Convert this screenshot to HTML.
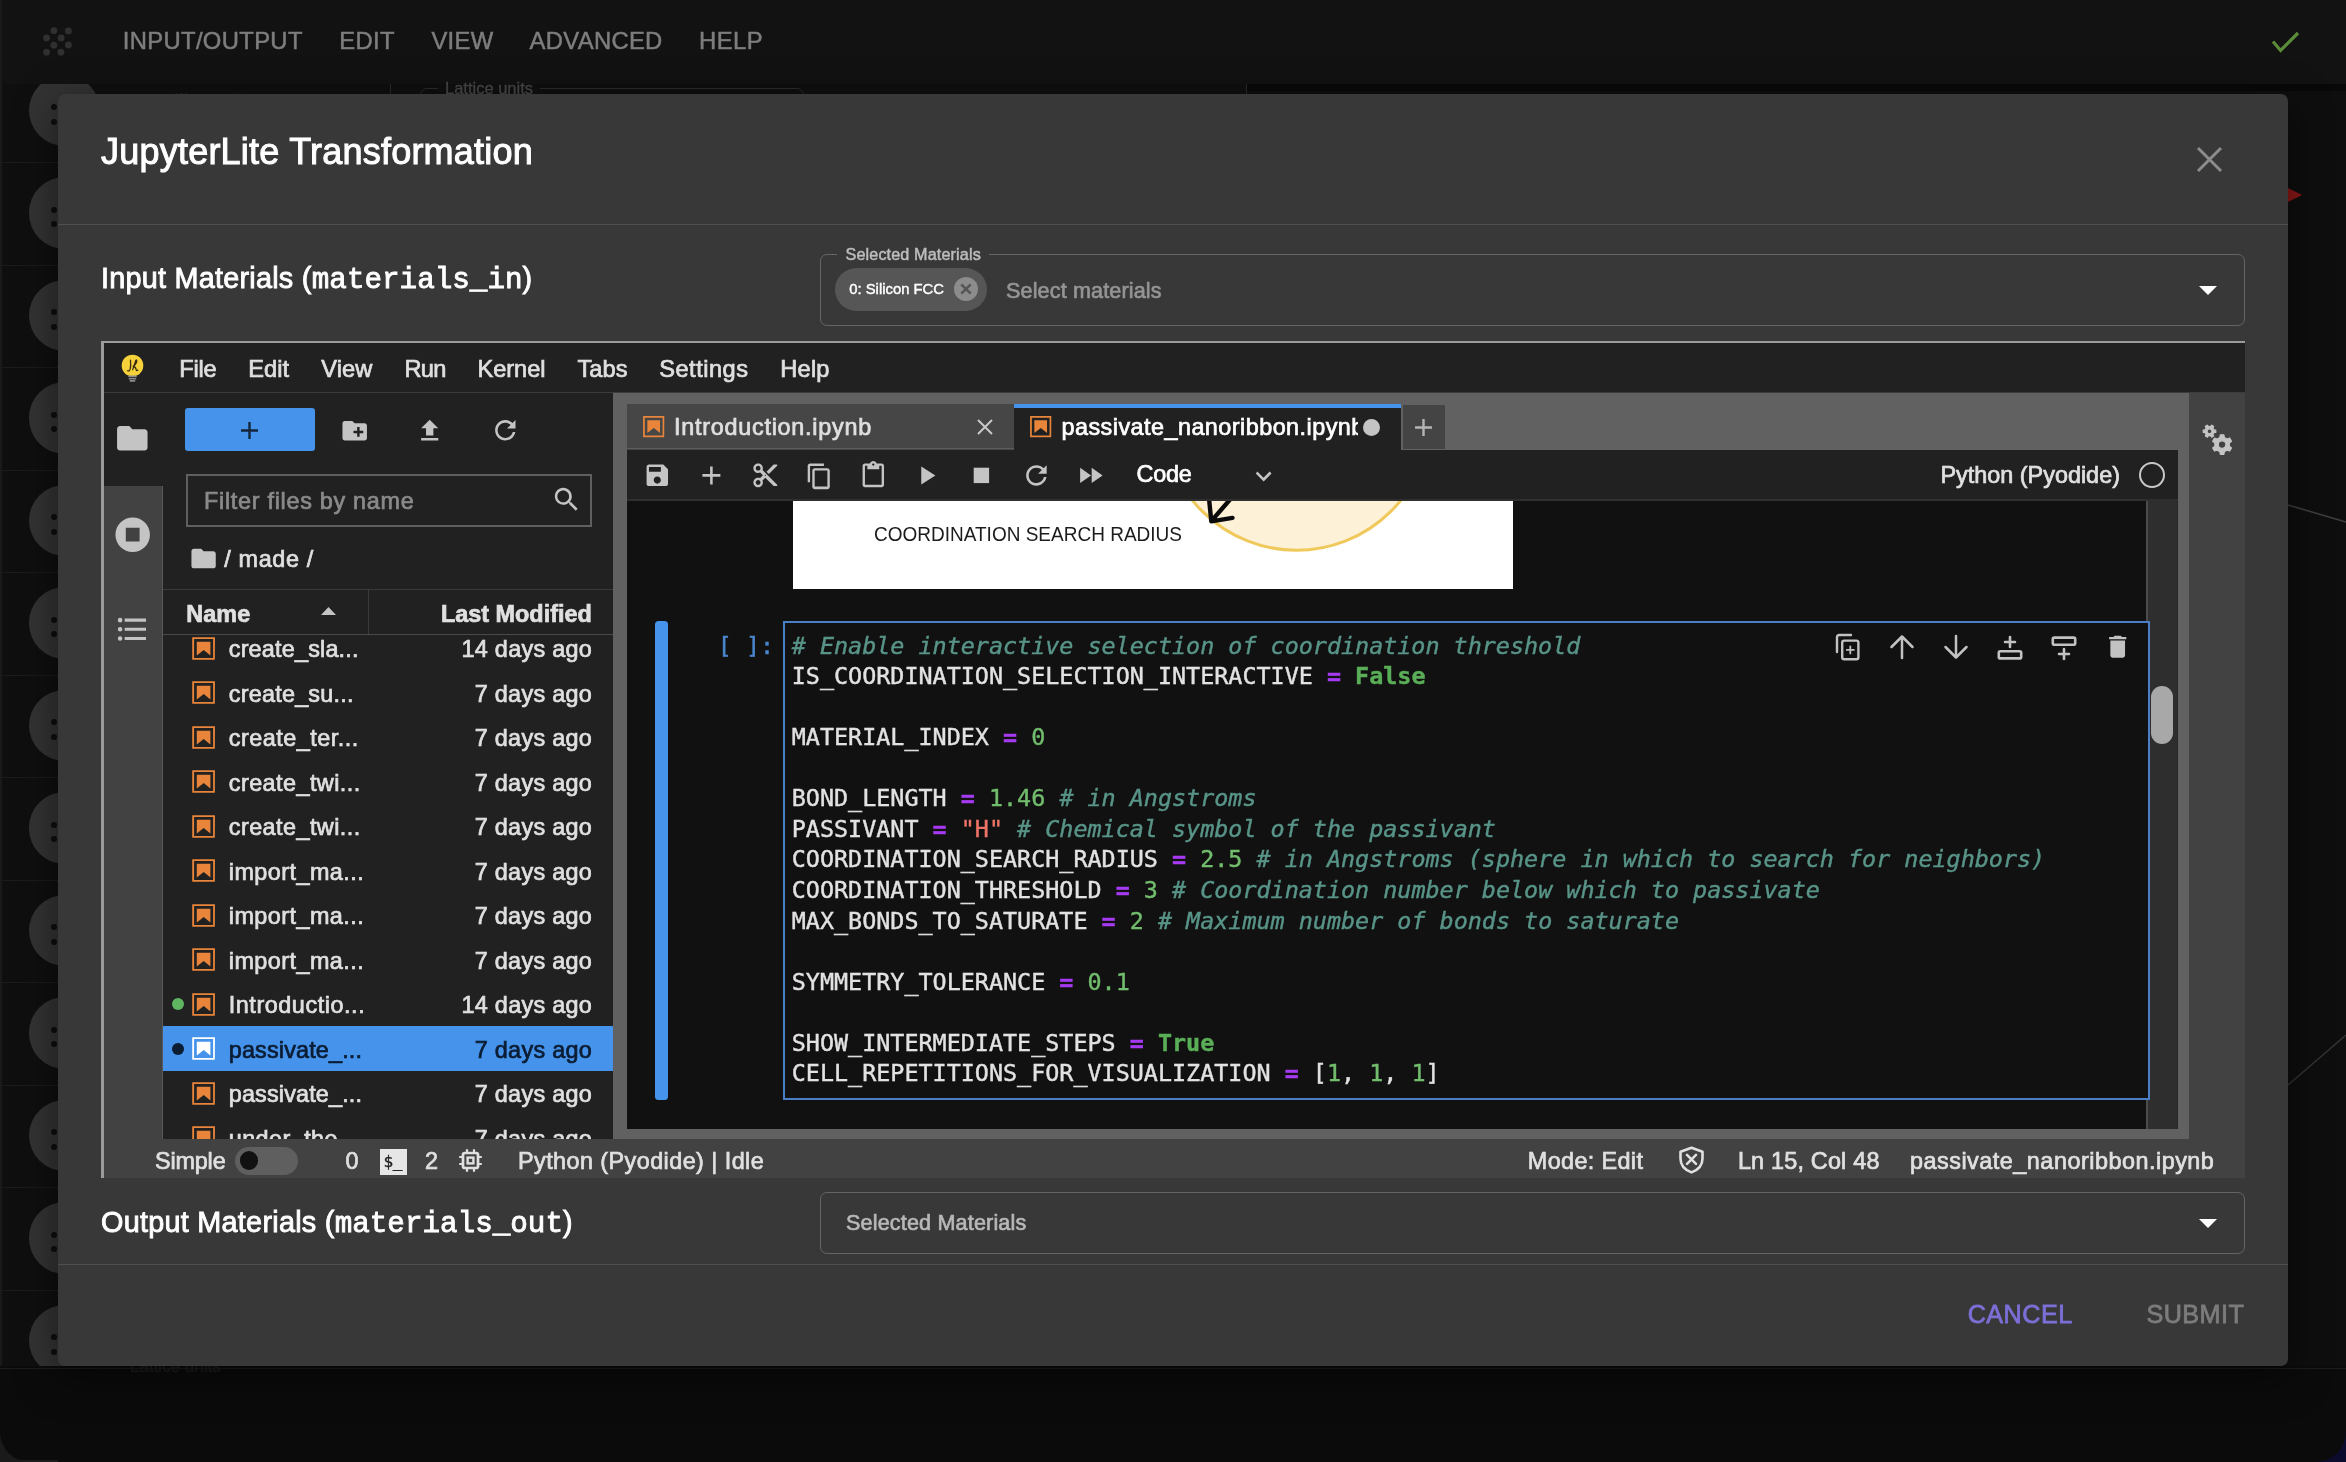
<!DOCTYPE html>
<html lang="en"><head><meta charset="utf-8"><title>JupyterLite Transformation</title>
<style>
html,body{margin:0;padding:0;}
body{width:2346px;height:1462px;overflow:hidden;background:#0c0c0c;position:relative;font-family:"Liberation Sans",Arial,sans-serif;}
#root{position:absolute;left:0;top:0;width:2346px;height:1462px;overflow:hidden;will-change:transform;}
.a{position:absolute;box-sizing:border-box;}
.t{position:absolute;white-space:pre;display:block;-webkit-text-stroke:0.7px;}
.m{-webkit-text-stroke:0.4px;}
svg{display:block;overflow:visible;}
</style></head><body><div id="root">
<div class="a" style="left:0.00px;top:83.00px;width:1245.00px;height:1285.00px;background:#0f0f0f;"></div>
<div class="a" style="left:1245.00px;top:83.00px;width:1101.00px;height:1285.00px;background:#0e0e0e;"></div>
<div class="a" style="left:1246.00px;top:83.50px;width:1100.00px;height:7.00px;background:#080808;"></div>
<div class="a" style="left:1245.50px;top:84.00px;width:1.20px;height:11.00px;background:#2a2a2a;"></div>
<div class="a" style="left:0.00px;top:0.00px;width:2346.00px;height:83.50px;background:#121212;"></div>
<div class="a" style="left:0.00px;top:0.00px;width:2.00px;height:1462.00px;background:#1a1a1a;"></div>
<svg class="a" style="left:0px;top:0px" width="100" height="80" viewBox="0 0 100 80" fill="#303030"><circle cx="53.9" cy="30.7" r="3.4"/><circle cx="68.4" cy="30.9" r="3.4"/><circle cx="46.6" cy="37.9" r="3.4"/><circle cx="61.1" cy="37.9" r="3.4"/><circle cx="53.9" cy="45.2" r="3.4"/><circle cx="68.4" cy="45" r="3.4"/><circle cx="46.6" cy="52.2" r="3.4"/><circle cx="60.9" cy="52.2" r="3.4"/></svg>
<span class="t" style="left:122.80px;top:29.49px;font-size:23.8px;line-height:23.8px;color:#7e7e7e;letter-spacing:0.345px;-webkit-text-stroke:0.5px;">INPUT/OUTPUT</span>
<span class="t" style="left:339.30px;top:29.49px;font-size:23.8px;line-height:23.8px;color:#7e7e7e;letter-spacing:0.322px;-webkit-text-stroke:0.5px;">EDIT</span>
<span class="t" style="left:431.40px;top:29.49px;font-size:23.8px;line-height:23.8px;color:#7e7e7e;letter-spacing:0.294px;-webkit-text-stroke:0.5px;">VIEW</span>
<span class="t" style="left:529.60px;top:29.49px;font-size:23.8px;line-height:23.8px;color:#7e7e7e;letter-spacing:0.314px;-webkit-text-stroke:0.5px;">ADVANCED</span>
<span class="t" style="left:699.00px;top:29.49px;font-size:23.8px;line-height:23.8px;color:#7e7e7e;letter-spacing:0.456px;-webkit-text-stroke:0.5px;">HELP</span>
<svg class="a" style="left:2268px;top:28px" width="36" height="28" viewBox="0 0 36 28" fill="none" stroke="#5b8c3a" stroke-width="3.2"><path d="M5 13.5 L12.6 22.5 L30 5"/></svg>
<div class="a" style="left:0.00px;top:162.00px;width:400.00px;height:1.00px;background:#1b1b1b;"></div>
<div class="a" style="left:0.00px;top:264.50px;width:400.00px;height:1.00px;background:#1b1b1b;"></div>
<div class="a" style="left:0.00px;top:367.00px;width:400.00px;height:1.00px;background:#1b1b1b;"></div>
<div class="a" style="left:0.00px;top:469.50px;width:400.00px;height:1.00px;background:#1b1b1b;"></div>
<div class="a" style="left:0.00px;top:572.00px;width:400.00px;height:1.00px;background:#1b1b1b;"></div>
<div class="a" style="left:0.00px;top:674.50px;width:400.00px;height:1.00px;background:#1b1b1b;"></div>
<div class="a" style="left:0.00px;top:777.00px;width:400.00px;height:1.00px;background:#1b1b1b;"></div>
<div class="a" style="left:0.00px;top:879.50px;width:400.00px;height:1.00px;background:#1b1b1b;"></div>
<div class="a" style="left:0.00px;top:982.00px;width:400.00px;height:1.00px;background:#1b1b1b;"></div>
<div class="a" style="left:0.00px;top:1084.50px;width:400.00px;height:1.00px;background:#1b1b1b;"></div>
<div class="a" style="left:0.00px;top:1187.00px;width:400.00px;height:1.00px;background:#1b1b1b;"></div>
<div class="a" style="left:0.00px;top:1289.50px;width:400.00px;height:1.00px;background:#1b1b1b;"></div>
<div class="a" style="left:0.00px;top:1392.00px;width:400.00px;height:1.00px;background:#1b1b1b;"></div>
<div class="a" style="left:0;top:84.2px;width:200px;height:1378px;overflow:hidden;">
<div class="a" style="left:28.9px;top:-9.60px;width:71.6px;height:71.6px;border-radius:50%;background:#333333;"></div>
<div class="a" style="left:50.6px;top:20.00px;width:6.2px;height:6.2px;border-radius:50%;background:#0e0e0e;"></div>
<div class="a" style="left:50.6px;top:34.40px;width:6.2px;height:6.2px;border-radius:50%;background:#0e0e0e;"></div>
<div class="a" style="left:28.9px;top:92.90px;width:71.6px;height:71.6px;border-radius:50%;background:#333333;"></div>
<div class="a" style="left:50.6px;top:122.50px;width:6.2px;height:6.2px;border-radius:50%;background:#0e0e0e;"></div>
<div class="a" style="left:50.6px;top:136.90px;width:6.2px;height:6.2px;border-radius:50%;background:#0e0e0e;"></div>
<div class="a" style="left:28.9px;top:195.40px;width:71.6px;height:71.6px;border-radius:50%;background:#333333;"></div>
<div class="a" style="left:50.6px;top:225.00px;width:6.2px;height:6.2px;border-radius:50%;background:#0e0e0e;"></div>
<div class="a" style="left:50.6px;top:239.40px;width:6.2px;height:6.2px;border-radius:50%;background:#0e0e0e;"></div>
<div class="a" style="left:28.9px;top:297.90px;width:71.6px;height:71.6px;border-radius:50%;background:#333333;"></div>
<div class="a" style="left:50.6px;top:327.50px;width:6.2px;height:6.2px;border-radius:50%;background:#0e0e0e;"></div>
<div class="a" style="left:50.6px;top:341.90px;width:6.2px;height:6.2px;border-radius:50%;background:#0e0e0e;"></div>
<div class="a" style="left:28.9px;top:400.40px;width:71.6px;height:71.6px;border-radius:50%;background:#333333;"></div>
<div class="a" style="left:50.6px;top:430.00px;width:6.2px;height:6.2px;border-radius:50%;background:#0e0e0e;"></div>
<div class="a" style="left:50.6px;top:444.40px;width:6.2px;height:6.2px;border-radius:50%;background:#0e0e0e;"></div>
<div class="a" style="left:28.9px;top:502.90px;width:71.6px;height:71.6px;border-radius:50%;background:#333333;"></div>
<div class="a" style="left:50.6px;top:532.50px;width:6.2px;height:6.2px;border-radius:50%;background:#0e0e0e;"></div>
<div class="a" style="left:50.6px;top:546.90px;width:6.2px;height:6.2px;border-radius:50%;background:#0e0e0e;"></div>
<div class="a" style="left:28.9px;top:605.40px;width:71.6px;height:71.6px;border-radius:50%;background:#333333;"></div>
<div class="a" style="left:50.6px;top:635.00px;width:6.2px;height:6.2px;border-radius:50%;background:#0e0e0e;"></div>
<div class="a" style="left:50.6px;top:649.40px;width:6.2px;height:6.2px;border-radius:50%;background:#0e0e0e;"></div>
<div class="a" style="left:28.9px;top:707.90px;width:71.6px;height:71.6px;border-radius:50%;background:#333333;"></div>
<div class="a" style="left:50.6px;top:737.50px;width:6.2px;height:6.2px;border-radius:50%;background:#0e0e0e;"></div>
<div class="a" style="left:50.6px;top:751.90px;width:6.2px;height:6.2px;border-radius:50%;background:#0e0e0e;"></div>
<div class="a" style="left:28.9px;top:810.40px;width:71.6px;height:71.6px;border-radius:50%;background:#333333;"></div>
<div class="a" style="left:50.6px;top:840.00px;width:6.2px;height:6.2px;border-radius:50%;background:#0e0e0e;"></div>
<div class="a" style="left:50.6px;top:854.40px;width:6.2px;height:6.2px;border-radius:50%;background:#0e0e0e;"></div>
<div class="a" style="left:28.9px;top:912.90px;width:71.6px;height:71.6px;border-radius:50%;background:#333333;"></div>
<div class="a" style="left:50.6px;top:942.50px;width:6.2px;height:6.2px;border-radius:50%;background:#0e0e0e;"></div>
<div class="a" style="left:50.6px;top:956.90px;width:6.2px;height:6.2px;border-radius:50%;background:#0e0e0e;"></div>
<div class="a" style="left:28.9px;top:1015.40px;width:71.6px;height:71.6px;border-radius:50%;background:#333333;"></div>
<div class="a" style="left:50.6px;top:1045.00px;width:6.2px;height:6.2px;border-radius:50%;background:#0e0e0e;"></div>
<div class="a" style="left:50.6px;top:1059.40px;width:6.2px;height:6.2px;border-radius:50%;background:#0e0e0e;"></div>
<div class="a" style="left:28.9px;top:1117.90px;width:71.6px;height:71.6px;border-radius:50%;background:#333333;"></div>
<div class="a" style="left:50.6px;top:1147.50px;width:6.2px;height:6.2px;border-radius:50%;background:#0e0e0e;"></div>
<div class="a" style="left:50.6px;top:1161.90px;width:6.2px;height:6.2px;border-radius:50%;background:#0e0e0e;"></div>
<div class="a" style="left:28.9px;top:1220.40px;width:71.6px;height:71.6px;border-radius:50%;background:#333333;"></div>
<div class="a" style="left:50.6px;top:1250.00px;width:6.2px;height:6.2px;border-radius:50%;background:#0e0e0e;"></div>
<div class="a" style="left:50.6px;top:1264.40px;width:6.2px;height:6.2px;border-radius:50%;background:#0e0e0e;"></div>
</div>
<div class="a" style="left:390.00px;top:84.00px;width:1.00px;height:12.00px;background:#2a2a2a;"></div>
<div class="a" style="left:420px;top:88px;width:384px;height:30px;border:1px solid #2c2c2c;border-radius:7px;"></div>
<div class="a" style="left:438.00px;top:86.00px;width:102.00px;height:6.00px;background:#101010;"></div>
<span class="t" style="left:445.00px;top:80.57px;font-size:16.6px;line-height:16.6px;color:#484848;letter-spacing:-0.045px;-webkit-text-stroke:0.3px;">Lattice units</span>
<span class="t" style="left:135.00px;top:90.91px;font-size:22px;line-height:22px;color:#1f1f1f;-webkit-text-stroke:0.66px;">0: Silicon FCC</span>
<svg class="a" style="left:2280px;top:180px" width="66" height="1000" viewBox="0 0 66 1000" fill="none"><path d="M8 8 L22 15 L8 22 Z" fill="#8b1717"/><path d="M8 325 L66 342" stroke="#3f3f3f" stroke-width="1.6"/><path d="M8 905 L66 855" stroke="#333" stroke-width="1.6"/></svg>
<div class="a" style="left:0.00px;top:1366.00px;width:2346.00px;height:96.00px;background:#0b0b0b;"></div>
<div class="a" style="left:0.00px;top:1368.00px;width:2346.00px;height:1.20px;background:#1d1d1d;"></div>
<span class="t" style="left:130.00px;top:1357.63px;font-size:17px;line-height:17px;color:#1e1e1e;-webkit-text-stroke:0.51px;">Lattice units</span>
<div class="a" style="left:-2px;top:1402px;width:60px;height:60px;border:2px solid #1c1c1c;border-radius:0 0 0 24px;border-top:none;border-right:none;"></div>
<svg class="a" style="left:2316px;top:1432px" width="30" height="30" viewBox="0 0 30 30"><path d="M30 0 V30 H0 A30 30 0 0 0 30 0 Z" fill="#0b0b2e"/></svg>
<svg class="a" style="left:0px;top:1432px" width="30" height="30" viewBox="0 0 30 30"><path d="M0 0 V30 H30 A30 30 0 0 1 0 0 Z" fill="#1a1a1a"/></svg>
<div class="a" style="left:58.00px;top:94.00px;width:2230.00px;height:1272.00px;background:#383838;border-radius:7px;box-shadow:0 10px 40px rgba(0,0,0,.5);"></div>
<span class="t" style="left:101.00px;top:133.98px;font-size:36px;line-height:36px;color:#ffffff;letter-spacing:0.223px;-webkit-text-stroke:1.0px;">JupyterLite Transformation</span>
<svg class="a" style="left:2197px;top:146.5px" width="25" height="25" viewBox="0 0 25 25" stroke="#8c8c8c" stroke-width="3" fill="none"><path d="M1 1 L24 24 M24 1 L1 24"/></svg>
<div class="a" style="left:58.00px;top:223.70px;width:2230.00px;height:1.20px;background:#4f4f4f;"></div>
<span class="t" style="left:101.00px;top:264.01px;font-size:28.8px;line-height:28.8px;color:#ffffff;letter-spacing:0.236px;-webkit-text-stroke:0.86px;">Input Materials (</span>
<span class="t" style="left:311.80px;top:265.91px;font-size:29.27px;line-height:29.27px;color:#ffffff;font-family:'Liberation Mono', monospace;-webkit-text-stroke:0.88px;">materials_in</span>
<span class="t" style="left:522.60px;top:264.01px;font-size:28.8px;line-height:28.8px;color:#ffffff;-webkit-text-stroke:0.86px;">)</span>
<div class="a" style="left:819.7px;top:254px;width:1425.8px;height:71.7px;border:1.3px solid #656565;border-radius:7px;"></div>
<div class="a" style="left:837.00px;top:252.00px;width:152.00px;height:5.00px;background:#383838;"></div>
<span class="t" style="left:845.50px;top:245.81px;font-size:16.2px;line-height:16.2px;color:#bdbdbd;letter-spacing:0.124px;-webkit-text-stroke:0.49px;">Selected Materials</span>
<div class="a" style="left:835.00px;top:268.00px;width:152.25px;height:43.00px;background:#565656;border-radius:22px;"></div>
<span class="t" style="left:849.25px;top:281.79px;font-size:14.8px;line-height:14.8px;color:#ffffff;letter-spacing:0.012px;-webkit-text-stroke:0.44px;">0: Silicon FCC</span>
<svg class="a" style="left:954px;top:277.25px" width="24" height="24" viewBox="0 0 24 24"><circle cx="12" cy="12" r="12" fill="#8c8c8c"/><path d="M7.3 7.3 L16.7 16.7 M16.7 7.3 L7.3 16.7" stroke="#565656" stroke-width="2.6" fill="none"/></svg>
<span class="t" style="left:1006.00px;top:279.55px;font-size:21.6px;line-height:21.6px;color:#959595;letter-spacing:0.130px;-webkit-text-stroke:0.65px;">Select materials</span>
<svg class="a" style="left:2198.5px;top:285.5px" width="18" height="9" viewBox="0 0 18 9" fill="#ffffff"><path d="M0 0 L18 0 L9 9 Z"/></svg>
<span class="t" style="left:101.00px;top:1208.16px;font-size:28.8px;line-height:28.8px;color:#ffffff;letter-spacing:0.267px;-webkit-text-stroke:0.86px;">Output Materials (</span>
<span class="t" style="left:334.69px;top:1210.06px;font-size:29.27px;line-height:29.27px;color:#ffffff;font-family:'Liberation Mono', monospace;-webkit-text-stroke:0.88px;">materials_out</span>
<span class="t" style="left:563.03px;top:1208.16px;font-size:28.8px;line-height:28.8px;color:#ffffff;-webkit-text-stroke:0.86px;">)</span>
<div class="a" style="left:819.7px;top:1192px;width:1425.8px;height:62px;border:1.3px solid #656565;border-radius:7px;"></div>
<span class="t" style="left:846.00px;top:1212.25px;font-size:21.6px;line-height:21.6px;color:#b8b8b8;letter-spacing:0.156px;-webkit-text-stroke:0.65px;">Selected Materials</span>
<svg class="a" style="left:2198.5px;top:1218.5px" width="18" height="9" viewBox="0 0 18 9" fill="#ffffff"><path d="M0 0 L18 0 L9 9 Z"/></svg>
<div class="a" style="left:58.00px;top:1263.60px;width:2230.00px;height:1.20px;background:#4f4f4f;"></div>
<span class="t" style="left:1967.70px;top:1301.71px;font-size:25.2px;line-height:25.2px;color:#7b6fd6;letter-spacing:0.461px;-webkit-text-stroke:0.76px;">CANCEL</span>
<span class="t" style="left:2146.40px;top:1301.71px;font-size:25.2px;line-height:25.2px;color:#7c7c7c;letter-spacing:0.466px;-webkit-text-stroke:0.76px;">SUBMIT</span>
<div class="a" style="left:101.00px;top:340.50px;width:2144.20px;height:837.00px;background:#9b9b9b;"></div>
<div class="a" style="left:104.25px;top:343.25px;width:2140.95px;height:834.25px;background:#212121;"></div>
<div class="a" style="left:104.25px;top:343.25px;width:2140.95px;height:48.75px;background:#212121;"></div>
<div class="a" style="left:104.25px;top:391.60px;width:2140.95px;height:1.00px;background:#3c3c3c;"></div>
<svg class="a" style="left:120px;top:354px" width="25" height="30" viewBox="0 0 25 30"><circle cx="12.5" cy="11.5" r="10.8" fill="#f5d13a"/><path d="M8.2 22.3 h8.6 M8.8 24.6 h7.4 M9.8 26.9 h5.4" stroke="#8a8a8a" stroke-width="1.6" fill="none"/><path d="M10.5 6.2 q0.6 6 -0.4 9.2 q-0.8 2.2 -2.4 1.2 M12.7 15.6 q1.8 -5 3 -9 q1.3 -1.6 1 1.3 q-1.2 3.2 -3.8 4.4 q2.6 -0.2 3.4 3.6 q0.5 1.2 1.6 0.2" stroke="#3a2a10" stroke-width="1.3" fill="none" stroke-linecap="round"/></svg>
<span class="t" style="left:179.25px;top:357.56px;font-size:23.6px;line-height:23.6px;color:#e0e0e0;letter-spacing:-0.195px;">File</span>
<span class="t" style="left:248.25px;top:357.56px;font-size:23.6px;line-height:23.6px;color:#e0e0e0;letter-spacing:0.021px;">Edit</span>
<span class="t" style="left:321.25px;top:357.56px;font-size:23.6px;line-height:23.6px;color:#e0e0e0;letter-spacing:0.130px;">View</span>
<span class="t" style="left:404.50px;top:357.56px;font-size:23.6px;line-height:23.6px;color:#e0e0e0;letter-spacing:-0.765px;">Run</span>
<span class="t" style="left:477.50px;top:357.56px;font-size:23.6px;line-height:23.6px;color:#e0e0e0;letter-spacing:-0.037px;">Kernel</span>
<span class="t" style="left:577.50px;top:357.56px;font-size:23.6px;line-height:23.6px;color:#e0e0e0;letter-spacing:0.037px;">Tabs</span>
<span class="t" style="left:659.25px;top:357.56px;font-size:23.6px;line-height:23.6px;color:#e0e0e0;letter-spacing:0.497px;">Settings</span>
<span class="t" style="left:780.25px;top:357.56px;font-size:23.6px;line-height:23.6px;color:#e0e0e0;letter-spacing:0.240px;">Help</span>
<div class="a" style="left:104.25px;top:392.60px;width:58.75px;height:746.65px;background:#424242;"></div>
<div class="a" style="left:104.25px;top:392.60px;width:58.75px;height:93.65px;background:#212121;"></div>
<svg class="a" style="left:114.45px;top:420.20px;" width="36.6" height="36.6" viewBox="0 0 24 24" fill="#c4c4c4"><path d="M10 4H4c-1.1 0-1.99.9-1.99 2L2 18c0 1.1.9 2 2 2h16c1.1 0 2-.9 2-2V8c0-1.1-.9-2-2-2h-8l-2-2z"/></svg>
<svg class="a" style="left:112.05px;top:513.80px;" width="41.4" height="41.4" viewBox="0 0 24 24" fill="#c4c4c4"><path d="M12 2C6.48 2 2 6.48 2 12s4.48 10 10 10 10-4.48 10-10S17.52 2 12 2zm4 14H8V8h8v8z"/></svg>
<svg class="a" style="left:114.20px;top:611.30px;" width="36.6" height="36.6" viewBox="0 0 24 24" fill="#c4c4c4"><path d="M7,5H21V7H7V5M7,13V11H21V13H7M4,4.5A1.5,1.5 0 0,1 5.5,6A1.5,1.5 0 0,1 4,7.5A1.5,1.5 0 0,1 2.5,6A1.5,1.5 0 0,1 4,4.5M4,10.5A1.5,1.5 0 0,1 5.5,12A1.5,1.5 0 0,1 4,13.5A1.5,1.5 0 0,1 2.5,12A1.5,1.5 0 0,1 4,10.5M7,19V17H21V19H7M4,16.5A1.5,1.5 0 0,1 5.5,18A1.5,1.5 0 0,1 4,19.5A1.5,1.5 0 0,1 2.5,18A1.5,1.5 0 0,1 4,16.5Z"/></svg>
<div class="a" style="left:163.00px;top:392.60px;width:450.00px;height:746.65px;background:#212121;"></div>
<div class="a" style="left:162.40px;top:486.25px;width:1.10px;height:653.00px;background:#585858;"></div>
<div class="a" style="left:185.00px;top:408.00px;width:130.25px;height:43.00px;background:#4593ea;border-radius:3px;"></div>
<svg class="a" style="left:235.00px;top:416.25px;" width="29" height="29" viewBox="0 0 24 24" fill="#14263c"><path d="M19 13h-6v6h-2v-6H5v-2h6V5h2v6h6v2z"/></svg>
<svg class="a" style="left:340.30px;top:416.05px;" width="29.4" height="29.4" viewBox="0 0 24 24" fill="#c4c4c4"><path d="M20 6h-8l-2-2H4c-1.11 0-1.99.89-1.99 2L2 18c0 1.11.89 2 2 2h16c1.11 0 2-.89 2-2V8c0-1.11-.89-2-2-2zm-1 8h-3v3h-2v-3h-3v-2h3V9h2v3h3v2z"/></svg>
<svg class="a" style="left:414.80px;top:416.05px;" width="29.4" height="29.4" viewBox="0 0 24 24" fill="#c4c4c4"><path d="M9 16h6v-6h4l-7-7-7 7h4zm-4 2h14v2H5z"/></svg>
<svg class="a" style="left:490.45px;top:415.45px;" width="30.6" height="30.6" viewBox="0 0 18 18" fill="#c4c4c4"><path d="M9 13.5c-2.49 0-4.5-2.01-4.5-4.5S6.51 4.5 9 4.5c1.24 0 2.36.52 3.17 1.33L10 8h5V3l-1.76 1.76C12.15 3.68 10.66 3 9 3 5.69 3 3.01 5.69 3.01 9S5.69 15 9 15c2.97 0 5.43-2.16 5.9-5h-1.52c-.46 2-2.24 3.5-4.38 3.5z"/></svg>
<div class="a" style="left:185.5px;top:474.2px;width:406.75px;height:53.3px;border:2px solid #5f5f5f;background:#212121;"></div>
<span class="t" style="left:204.00px;top:489.93px;font-size:23.4px;line-height:23.4px;color:#8a8a8a;letter-spacing:0.707px;">Filter files by name</span>
<svg class="a" style="left:552.25px;top:485.25px;" width="28.5" height="28.5" viewBox="0 0 18 18" fill="#c4c4c4"><path d="M12.1,10.9h-0.7l-0.2-0.2c0.8-0.9,1.3-2.2,1.3-3.5c0-3-2.4-5.4-5.4-5.4S1.8,4.2,1.8,7.1s2.4,5.4,5.4,5.4 c1.3,0,2.5-0.5,3.5-1.3l0.2,0.2v0.7l4.1,4.1l1.2-1.2L12.1,10.9z M7.1,10.9c-2.1,0-3.7-1.7-3.7-3.7s1.7-3.7,3.7-3.7s3.7,1.7,3.7,3.7 S9.2,10.9,7.1,10.9z"/></svg>
<svg class="a" style="left:188.50px;top:543.90px;" width="29.2" height="29.2" viewBox="0 0 24 24" fill="#c4c4c4"><path d="M10 4H4c-1.1 0-1.99.9-1.99 2L2 18c0 1.1.9 2 2 2h16c1.1 0 2-.9 2-2V8c0-1.1-.9-2-2-2h-8l-2-2z"/></svg>
<span class="t" style="left:224.25px;top:547.53px;font-size:23.4px;line-height:23.4px;color:#e0e0e0;letter-spacing:0.651px;">/ made /</span>
<div class="a" style="left:163.00px;top:589.00px;width:450.00px;height:1.20px;background:#3a3a3a;"></div>
<div class="a" style="left:163.00px;top:634.00px;width:450.00px;height:1.20px;background:#4a4a4a;"></div>
<div class="a" style="left:368.00px;top:590.00px;width:1.20px;height:44.00px;background:#3a3a3a;"></div>
<span class="t" style="left:186.25px;top:602.93px;font-size:23.4px;line-height:23.4px;color:#e0e0e0;font-weight:700;letter-spacing:0.067px;">Name</span>
<span class="t" style="right:1754.25px;top:602.93px;font-size:23.4px;line-height:23.4px;color:#e0e0e0;font-weight:700;">Last Modified</span>
<svg class="a" style="left:320.5px;top:607.4px" width="15" height="8" viewBox="0 0 15 8" fill="#c4c4c4"><path d="M0 8 L7.5 0 L15 8 Z"/></svg>
<div class="a" style="left:163px;top:635.2px;width:450px;height:503.55px;overflow:hidden;">
<svg class="a" style="left:26.5px;top:-0.70px" width="27.2" height="27.2" viewBox="0 0 22 22"><path fill="#e8853a" d="M18.7 3.3v15.4H3.3V3.3h15.4m1.5-1.5H1.8v18.3h18.3l.1-18.3z"/><path fill="#e8853a" d="M16.5 16.5l-5.4-4.3-5.6 4.3v-11h11z"/></svg>
<span class="t" style="left:65.75px;top:2.97px;font-size:23.4px;line-height:23.4px;color:#e0e0e0;letter-spacing:0.195px">create_sla...</span>
<span class="t" style="right:21.25px;top:2.97px;font-size:23.4px;line-height:23.4px;color:#e0e0e0;letter-spacing:0.28px;margin-right:-0.28px">14 days ago</span>
<svg class="a" style="left:26.5px;top:43.82px" width="27.2" height="27.2" viewBox="0 0 22 22"><path fill="#e8853a" d="M18.7 3.3v15.4H3.3V3.3h15.4m1.5-1.5H1.8v18.3h18.3l.1-18.3z"/><path fill="#e8853a" d="M16.5 16.5l-5.4-4.3-5.6 4.3v-11h11z"/></svg>
<span class="t" style="left:65.75px;top:47.49px;font-size:23.4px;line-height:23.4px;color:#e0e0e0;letter-spacing:0.228px">create_su...</span>
<span class="t" style="right:21.25px;top:47.49px;font-size:23.4px;line-height:23.4px;color:#e0e0e0;letter-spacing:0.28px;margin-right:-0.28px">7 days ago</span>
<svg class="a" style="left:26.5px;top:88.34px" width="27.2" height="27.2" viewBox="0 0 22 22"><path fill="#e8853a" d="M18.7 3.3v15.4H3.3V3.3h15.4m1.5-1.5H1.8v18.3h18.3l.1-18.3z"/><path fill="#e8853a" d="M16.5 16.5l-5.4-4.3-5.6 4.3v-11h11z"/></svg>
<span class="t" style="left:65.75px;top:92.01px;font-size:23.4px;line-height:23.4px;color:#e0e0e0;letter-spacing:0.494px">create_ter...</span>
<span class="t" style="right:21.25px;top:92.01px;font-size:23.4px;line-height:23.4px;color:#e0e0e0;letter-spacing:0.28px;margin-right:-0.28px">7 days ago</span>
<svg class="a" style="left:26.5px;top:132.86px" width="27.2" height="27.2" viewBox="0 0 22 22"><path fill="#e8853a" d="M18.7 3.3v15.4H3.3V3.3h15.4m1.5-1.5H1.8v18.3h18.3l.1-18.3z"/><path fill="#e8853a" d="M16.5 16.5l-5.4-4.3-5.6 4.3v-11h11z"/></svg>
<span class="t" style="left:65.75px;top:136.53px;font-size:23.4px;line-height:23.4px;color:#e0e0e0;letter-spacing:0.450px">create_twi...</span>
<span class="t" style="right:21.25px;top:136.53px;font-size:23.4px;line-height:23.4px;color:#e0e0e0;letter-spacing:0.28px;margin-right:-0.28px">7 days ago</span>
<svg class="a" style="left:26.5px;top:177.38px" width="27.2" height="27.2" viewBox="0 0 22 22"><path fill="#e8853a" d="M18.7 3.3v15.4H3.3V3.3h15.4m1.5-1.5H1.8v18.3h18.3l.1-18.3z"/><path fill="#e8853a" d="M16.5 16.5l-5.4-4.3-5.6 4.3v-11h11z"/></svg>
<span class="t" style="left:65.75px;top:181.05px;font-size:23.4px;line-height:23.4px;color:#e0e0e0;letter-spacing:0.450px">create_twi...</span>
<span class="t" style="right:21.25px;top:181.05px;font-size:23.4px;line-height:23.4px;color:#e0e0e0;letter-spacing:0.28px;margin-right:-0.28px">7 days ago</span>
<svg class="a" style="left:26.5px;top:221.90px" width="27.2" height="27.2" viewBox="0 0 22 22"><path fill="#e8853a" d="M18.7 3.3v15.4H3.3V3.3h15.4m1.5-1.5H1.8v18.3h18.3l.1-18.3z"/><path fill="#e8853a" d="M16.5 16.5l-5.4-4.3-5.6 4.3v-11h11z"/></svg>
<span class="t" style="left:65.75px;top:225.57px;font-size:23.4px;line-height:23.4px;color:#e0e0e0;letter-spacing:0.455px">import_ma...</span>
<span class="t" style="right:21.25px;top:225.57px;font-size:23.4px;line-height:23.4px;color:#e0e0e0;letter-spacing:0.28px;margin-right:-0.28px">7 days ago</span>
<svg class="a" style="left:26.5px;top:266.42px" width="27.2" height="27.2" viewBox="0 0 22 22"><path fill="#e8853a" d="M18.7 3.3v15.4H3.3V3.3h15.4m1.5-1.5H1.8v18.3h18.3l.1-18.3z"/><path fill="#e8853a" d="M16.5 16.5l-5.4-4.3-5.6 4.3v-11h11z"/></svg>
<span class="t" style="left:65.75px;top:270.09px;font-size:23.4px;line-height:23.4px;color:#e0e0e0;letter-spacing:0.455px">import_ma...</span>
<span class="t" style="right:21.25px;top:270.09px;font-size:23.4px;line-height:23.4px;color:#e0e0e0;letter-spacing:0.28px;margin-right:-0.28px">7 days ago</span>
<svg class="a" style="left:26.5px;top:310.94px" width="27.2" height="27.2" viewBox="0 0 22 22"><path fill="#e8853a" d="M18.7 3.3v15.4H3.3V3.3h15.4m1.5-1.5H1.8v18.3h18.3l.1-18.3z"/><path fill="#e8853a" d="M16.5 16.5l-5.4-4.3-5.6 4.3v-11h11z"/></svg>
<span class="t" style="left:65.75px;top:314.61px;font-size:23.4px;line-height:23.4px;color:#e0e0e0;letter-spacing:0.455px">import_ma...</span>
<span class="t" style="right:21.25px;top:314.61px;font-size:23.4px;line-height:23.4px;color:#e0e0e0;letter-spacing:0.28px;margin-right:-0.28px">7 days ago</span>
<svg class="a" style="left:26.5px;top:355.46px" width="27.2" height="27.2" viewBox="0 0 22 22"><path fill="#e8853a" d="M18.7 3.3v15.4H3.3V3.3h15.4m1.5-1.5H1.8v18.3h18.3l.1-18.3z"/><path fill="#e8853a" d="M16.5 16.5l-5.4-4.3-5.6 4.3v-11h11z"/></svg>
<span class="t" style="left:65.75px;top:359.13px;font-size:23.4px;line-height:23.4px;color:#e0e0e0;letter-spacing:0.552px">Introductio...</span>
<span class="t" style="right:21.25px;top:359.13px;font-size:23.4px;line-height:23.4px;color:#e0e0e0;letter-spacing:0.28px;margin-right:-0.28px">14 days ago</span>
<div class="a" style="left:8.5px;top:363.30px;width:12px;height:12px;border-radius:50%;background:#5fb661;"></div>
<div class="a" style="left:0;top:391.12px;width:450px;height:45px;background:#4593ea;"></div>
<svg class="a" style="left:26.5px;top:399.98px" width="27.2" height="27.2" viewBox="0 0 22 22"><path fill="#ffffff" d="M18.7 3.3v15.4H3.3V3.3h15.4m1.5-1.5H1.8v18.3h18.3l.1-18.3z"/><path fill="#ffffff" d="M16.5 16.5l-5.4-4.3-5.6 4.3v-11h11z"/></svg>
<span class="t" style="left:65.75px;top:403.65px;font-size:23.4px;line-height:23.4px;color:#0b1c33;letter-spacing:0.163px">passivate_...</span>
<span class="t" style="right:21.25px;top:403.65px;font-size:23.4px;line-height:23.4px;color:#0b1c33;letter-spacing:0.28px;margin-right:-0.28px">7 days ago</span>
<div class="a" style="left:8.5px;top:407.82px;width:12px;height:12px;border-radius:50%;background:#0b1c33;"></div>
<svg class="a" style="left:26.5px;top:444.50px" width="27.2" height="27.2" viewBox="0 0 22 22"><path fill="#e8853a" d="M18.7 3.3v15.4H3.3V3.3h15.4m1.5-1.5H1.8v18.3h18.3l.1-18.3z"/><path fill="#e8853a" d="M16.5 16.5l-5.4-4.3-5.6 4.3v-11h11z"/></svg>
<span class="t" style="left:65.75px;top:448.17px;font-size:23.4px;line-height:23.4px;color:#e0e0e0;letter-spacing:0.163px">passivate_...</span>
<span class="t" style="right:21.25px;top:448.17px;font-size:23.4px;line-height:23.4px;color:#e0e0e0;letter-spacing:0.28px;margin-right:-0.28px">7 days ago</span>
<svg class="a" style="left:26.5px;top:489.02px" width="27.2" height="27.2" viewBox="0 0 22 22"><path fill="#e8853a" d="M18.7 3.3v15.4H3.3V3.3h15.4m1.5-1.5H1.8v18.3h18.3l.1-18.3z"/><path fill="#e8853a" d="M16.5 16.5l-5.4-4.3-5.6 4.3v-11h11z"/></svg>
<span class="t" style="left:65.75px;top:492.69px;font-size:23.4px;line-height:23.4px;color:#e0e0e0;letter-spacing:0.425px">under_the...</span>
<span class="t" style="right:21.25px;top:492.69px;font-size:23.4px;line-height:23.4px;color:#e0e0e0;letter-spacing:0.28px;margin-right:-0.28px">7 days ago</span>
</div>
<div class="a" style="left:613.00px;top:392.60px;width:1576.00px;height:746.65px;background:#616161;"></div>
<div class="a" style="left:2189.00px;top:392.60px;width:56.20px;height:746.65px;background:#424242;"></div>
<div class="a" style="left:104.25px;top:1139.25px;width:2140.95px;height:38.25px;background:#424242;"></div>
<div class="a" style="left:627.20px;top:404.25px;width:386.80px;height:45.25px;background:#464646;"></div>
<div class="a" style="left:627.20px;top:447.90px;width:386.80px;height:1.20px;background:#5c5c5c;"></div>
<svg class="a" style="left:640.8px;top:413.9px" width="25.4" height="25.4" viewBox="0 0 22 22"><path fill="#e8853a" d="M18.7 3.3v15.4H3.3V3.3h15.4m1.5-1.5H1.8v18.3h18.3l.1-18.3z"/><path fill="#e8853a" d="M16.5 16.5l-5.4-4.3-5.6 4.3v-11h11z"/></svg>
<span class="t" style="left:674.00px;top:415.73px;font-size:23.4px;line-height:23.4px;color:#e0e0e0;letter-spacing:0.738px;">Introduction.ipynb</span>
<svg class="a" style="left:976.75px;top:418.75px" width="16" height="16" viewBox="0 0 16 16" stroke="#c8c8c8" stroke-width="2" fill="none"><path d="M1 1 L15 15 M15 1 L1 15"/></svg>
<div class="a" style="left:1014.00px;top:404.25px;width:387.25px;height:45.75px;background:#212121;"></div>
<div class="a" style="left:1014.00px;top:404.25px;width:387.25px;height:3.75px;background:#4593ea;"></div>
<svg class="a" style="left:1028.2px;top:413.9px" width="25.4" height="25.4" viewBox="0 0 22 22"><path fill="#e8853a" d="M18.7 3.3v15.4H3.3V3.3h15.4m1.5-1.5H1.8v18.3h18.3l.1-18.3z"/><path fill="#e8853a" d="M16.5 16.5l-5.4-4.3-5.6 4.3v-11h11z"/></svg>
<div class="a" style="left:1061.5px;top:408px;width:296px;height:40px;overflow:hidden;"><span class="t" style="left:0;top:8.23px;font-size:23.4px;line-height:23.4px;color:#ffffff;letter-spacing:0.46px">passivate_nanoribbon.ipynb</span></div>
<div class="a" style="left:1363.00px;top:419.00px;width:17.00px;height:17.00px;background:#c4c4c4;border-radius:50%;"></div>
<div class="a" style="left:1402.50px;top:405.00px;width:42.75px;height:43.50px;background:#444444;"></div>
<svg class="a" style="left:1409.25px;top:412.50px;" width="29" height="29" viewBox="0 0 24 24" fill="#b4b4b4"><path d="M19 13h-6v6h-2v-6H5v-2h6V5h2v6h6v2z"/></svg>
<div class="a" style="left:627.20px;top:449.70px;width:1550.80px;height:50.30px;background:#212121;"></div>
<div class="a" style="left:627.20px;top:499.40px;width:1550.80px;height:1.20px;background:#2f2f2f;"></div>
<svg class="a" style="left:642.95px;top:461.45px;" width="28.6" height="28.6" viewBox="0 0 24 24" fill="#c4c4c4"><path d="M17 3H5c-1.11 0-2 .9-2 2v14c0 1.1.89 2 2 2h14c1.1 0 2-.9 2-2V7l-4-4zm-5 16c-1.66 0-3-1.34-3-3s1.34-3 3-3 3 1.34 3 3-1.34 3-3 3zm3-10H5V5h10v4z"/></svg>
<svg class="a" style="left:696.10px;top:460.35px;" width="30.8" height="30.8" viewBox="0 0 24 24" fill="#c4c4c4"><path d="M19 13h-6v6h-2v-6H5v-2h6V5h2v6h6v2z"/></svg>
<svg class="a" style="left:751.20px;top:461.45px;" width="28.6" height="28.6" viewBox="0 0 24 24" fill="#c4c4c4"><path d="M9.64 7.64c.23-.5.36-1.05.36-1.64 0-2.21-1.79-4-4-4S2 3.79 2 6s1.79 4 4 4c.59 0 1.14-.13 1.64-.36L10 12l-2.36 2.36C7.14 14.13 6.59 14 6 14c-2.21 0-4 1.79-4 4s1.79 4 4 4 4-1.79 4-4c0-.59-.13-1.14-.36-1.64L12 14l7 7h3v-1L9.64 7.64zM6 8c-1.1 0-2-.89-2-2s.9-2 2-2 2 .89 2 2-.9 2-2 2zm0 12c-1.1 0-2-.89-2-2s.9-2 2-2 2 .89 2 2-.9 2-2 2zm6-7.5c-.28 0-.5-.22-.5-.5s.22-.5.5-.5.5.22.5.5-.22.5-.5.5zM19 3l-6 6 2 2 7-7V3z"/></svg>
<svg class="a" style="left:804.70px;top:462.20px;" width="28.6" height="28.6" viewBox="0 0 18 18" fill="#c4c4c4"><path d="M11.9,1H3.2C2.4,1,1.7,1.7,1.7,2.5v10.2h1.5V2.5h8.7V1z M14.1,3.9h-8c-0.8,0-1.5,0.7-1.5,1.5v10.2c0,0.8,0.7,1.5,1.5,1.5h8 c0.8,0,1.5-0.7,1.5-1.5V5.4C15.5,4.6,14.9,3.9,14.1,3.9z M14.1,15.5h-8V5.4h8V15.5z"/></svg>
<svg class="a" style="left:859.20px;top:460.70px;" width="28.6" height="28.6" viewBox="0 0 24 24" fill="#c4c4c4"><path d="M19 2h-4.18C14.4.84 13.3 0 12 0c-1.3 0-2.4.84-2.82 2H5c-1.1 0-2 .9-2 2v16c0 1.1.9 2 2 2h14c1.1 0 2-.9 2-2V4c0-1.1-.9-2-2-2zm-7 0c.55 0 1 .45 1 1s-.45 1-1 1-1-.45-1-1 .45-1 1-1zm7 18H5V4h2v3h10V4h2v16z"/></svg>
<svg class="a" style="left:911.10px;top:460.35px;" width="30.8" height="30.8" viewBox="0 0 24 24" fill="#c4c4c4"><path d="M8 5v14l11-7z"/></svg>
<svg class="a" style="left:966.35px;top:460.35px;" width="30.8" height="30.8" viewBox="0 0 24 24" fill="#c4c4c4"><path d="M6 6h12v12H6z"/></svg>
<svg class="a" style="left:1020.60px;top:460.35px;" width="30.8" height="30.8" viewBox="0 0 18 18" fill="#c4c4c4"><path d="M9 13.5c-2.49 0-4.5-2.01-4.5-4.5S6.51 4.5 9 4.5c1.24 0 2.36.52 3.17 1.33L10 8h5V3l-1.76 1.76C12.15 3.68 10.66 3 9 3 5.69 3 3.01 5.69 3.01 9S5.69 15 9 15c2.97 0 5.43-2.16 5.9-5h-1.52c-.46 2-2.24 3.5-4.38 3.5z"/></svg>
<svg class="a" style="left:1075.10px;top:460.35px;" width="30.8" height="30.8" viewBox="0 0 24 24" fill="#c4c4c4"><path d="M4 18l8.5-6L4 6v12zm9-12v12l8.5-6L13 6z"/></svg>
<span class="t" style="left:1136.50px;top:462.73px;font-size:23.4px;line-height:23.4px;color:#ffffff;letter-spacing:-0.236px;">Code</span>
<svg class="a" style="left:1249.00px;top:462.00px;" width="29" height="29" viewBox="0 0 18 18" fill="#c4c4c4"><path d="M5.2,5.9L9,9.7l3.8-3.8l1.2,1.2l-4.9,5l-4.9-5L5.2,5.9z"/></svg>
<span class="t" style="left:1940.50px;top:464.23px;font-size:23.4px;line-height:23.4px;color:#e0e0e0;letter-spacing:-0.000px;">Python (Pyodide)</span>
<div class="a" style="left:2138.75px;top:461.5px;width:26.5px;height:26.5px;border:2.4px solid #c8c8c8;border-radius:50%;"></div>
<div class="a" style="left:627.20px;top:500.60px;width:1550.80px;height:628.15px;background:#111111;"></div>
<div class="a" style="left:2145.60px;top:500.60px;width:32.00px;height:628.15px;background:#2e2e2e;border-left:2px solid #4c4c4c;border-right:1px solid #262626;"></div>
<div class="a" style="left:793px;top:500.6px;width:720.25px;height:88.4px;background:#ffffff;overflow:hidden;"><svg class="a" style="left:0;top:0" width="721" height="88" viewBox="793 500.6 721 88"><circle cx="1296.6" cy="416.3" r="133.6" fill="#fdf1d8" stroke="#f0c95c" stroke-width="3"/><path d="M1231 498 L1211.5 520.5 M1209.3 501 L1211.3 521 L1232.5 517.5" stroke="#0a0a0a" stroke-width="4.4" fill="none" stroke-linecap="round" stroke-linejoin="round"/><text x="874" y="541" font-family="Liberation Sans, Arial, sans-serif" font-size="20" fill="#1c1c1c" textLength="308" lengthAdjust="spacingAndGlyphs">COORDINATION SEARCH RADIUS</text></svg></div>
<div class="a" style="left:654.50px;top:621.25px;width:13.75px;height:478.75px;background:#4593ea;border-radius:3.5px;"></div>
<div class="a" style="left:782.6px;top:620.8px;width:1367.6px;height:479.2px;border:2px solid #4a7fc8;background:#111111;"></div>
<span class="t m" style="left:717.80px;top:634.70px;font-size:23.4px;line-height:23.4px;color:#4a86cc;font-family:'DejaVu Sans Mono', 'Liberation Mono', monospace;">[ ]:</span>
<span class="t m" style="left:791.75px;top:634.70px;font-size:23.4px;line-height:23.4px;color:#e2e2e2;font-family:'DejaVu Sans Mono', 'Liberation Mono', monospace;"><span style="color:#589488;font-style:italic;"># Enable interactive selection of coordination threshold</span></span>
<span class="t m" style="left:791.75px;top:665.24px;font-size:23.4px;line-height:23.4px;color:#e2e2e2;font-family:'DejaVu Sans Mono', 'Liberation Mono', monospace;"><span style="color:#e2e2e2;">IS_COORDINATION_SELECTION_INTERACTIVE </span><span style="color:#a63af2;font-weight:700;">=</span> <span style="color:#5aae57;font-weight:700;">False</span></span>
<span class="t m" style="left:791.75px;top:726.32px;font-size:23.4px;line-height:23.4px;color:#e2e2e2;font-family:'DejaVu Sans Mono', 'Liberation Mono', monospace;"><span style="color:#e2e2e2;">MATERIAL_INDEX </span><span style="color:#a63af2;font-weight:700;">=</span> <span style="color:#72bd6d;">0</span></span>
<span class="t m" style="left:791.75px;top:787.40px;font-size:23.4px;line-height:23.4px;color:#e2e2e2;font-family:'DejaVu Sans Mono', 'Liberation Mono', monospace;"><span style="color:#e2e2e2;">BOND_LENGTH </span><span style="color:#a63af2;font-weight:700;">=</span> <span style="color:#72bd6d;">1.46</span> <span style="color:#589488;font-style:italic;"># in Angstroms</span></span>
<span class="t m" style="left:791.75px;top:817.94px;font-size:23.4px;line-height:23.4px;color:#e2e2e2;font-family:'DejaVu Sans Mono', 'Liberation Mono', monospace;"><span style="color:#e2e2e2;">PASSIVANT </span><span style="color:#a63af2;font-weight:700;">=</span> <span style="color:#ee7468;">&quot;H&quot;</span> <span style="color:#589488;font-style:italic;"># Chemical symbol of the passivant</span></span>
<span class="t m" style="left:791.75px;top:848.48px;font-size:23.4px;line-height:23.4px;color:#e2e2e2;font-family:'DejaVu Sans Mono', 'Liberation Mono', monospace;"><span style="color:#e2e2e2;">COORDINATION_SEARCH_RADIUS </span><span style="color:#a63af2;font-weight:700;">=</span> <span style="color:#72bd6d;">2.5</span> <span style="color:#589488;font-style:italic;"># in Angstroms (sphere in which to search for neighbors)</span></span>
<span class="t m" style="left:791.75px;top:879.02px;font-size:23.4px;line-height:23.4px;color:#e2e2e2;font-family:'DejaVu Sans Mono', 'Liberation Mono', monospace;"><span style="color:#e2e2e2;">COORDINATION_THRESHOLD </span><span style="color:#a63af2;font-weight:700;">=</span> <span style="color:#72bd6d;">3</span> <span style="color:#589488;font-style:italic;"># Coordination number below which to passivate</span></span>
<span class="t m" style="left:791.75px;top:909.56px;font-size:23.4px;line-height:23.4px;color:#e2e2e2;font-family:'DejaVu Sans Mono', 'Liberation Mono', monospace;"><span style="color:#e2e2e2;">MAX_BONDS_TO_SATURATE </span><span style="color:#a63af2;font-weight:700;">=</span> <span style="color:#72bd6d;">2</span> <span style="color:#589488;font-style:italic;"># Maximum number of bonds to saturate</span></span>
<span class="t m" style="left:791.75px;top:970.64px;font-size:23.4px;line-height:23.4px;color:#e2e2e2;font-family:'DejaVu Sans Mono', 'Liberation Mono', monospace;"><span style="color:#e2e2e2;">SYMMETRY_TOLERANCE </span><span style="color:#a63af2;font-weight:700;">=</span> <span style="color:#72bd6d;">0.1</span></span>
<span class="t m" style="left:791.75px;top:1031.72px;font-size:23.4px;line-height:23.4px;color:#e2e2e2;font-family:'DejaVu Sans Mono', 'Liberation Mono', monospace;"><span style="color:#e2e2e2;">SHOW_INTERMEDIATE_STEPS </span><span style="color:#a63af2;font-weight:700;">=</span> <span style="color:#5aae57;font-weight:700;">True</span></span>
<span class="t m" style="left:791.75px;top:1062.26px;font-size:23.4px;line-height:23.4px;color:#e2e2e2;font-family:'DejaVu Sans Mono', 'Liberation Mono', monospace;"><span style="color:#e2e2e2;">CELL_REPETITIONS_FOR_VISUALIZATION </span><span style="color:#a63af2;font-weight:700;">=</span> <span style="color:#e2e2e2;">[</span><span style="color:#72bd6d;">1</span><span style="color:#e2e2e2;">, </span><span style="color:#72bd6d;">1</span><span style="color:#e2e2e2;">, </span><span style="color:#72bd6d;">1</span><span style="color:#e2e2e2;">]</span></span>
<svg class="a" style="left:1835px;top:633px" width="26" height="28" viewBox="0 0 26 28" fill="none" stroke="#c2c2c2" stroke-width="2.4" stroke-linecap="round" stroke-linejoin="round"><path d="M2 19 V4.5 Q2 2 4.5 2 H16"/><rect x="7.2" y="7.6" width="16.2" height="18.6" rx="2"/><path d="M15.3 13.4 v7 M11.8 16.9 h7" stroke-width="1.8"/></svg>
<svg class="a" style="left:1888.5px;top:634px" width="26" height="26" viewBox="0 0 26 26" fill="none" stroke="#c2c2c2" stroke-width="2.5" stroke-linecap="round" stroke-linejoin="round"><path d="M13 24 V3 M2.5 13 L13 2.5 L23.5 13"/></svg>
<svg class="a" style="left:1942.5px;top:634px" width="26" height="26" viewBox="0 0 26 26" fill="none" stroke="#c2c2c2" stroke-width="2.5" stroke-linecap="round" stroke-linejoin="round"><path d="M13 2 V23 M2.5 13 L13 23.5 L23.5 13"/></svg>
<svg class="a" style="left:1996.5px;top:634.5px" width="26" height="26" viewBox="0 0 26 26" fill="none" stroke="#c2c2c2" stroke-width="2.6" stroke-linecap="round" stroke-linejoin="round"><path d="M13 2 v10 M8 7 h10"/><rect x="1.8" y="16.2" width="22.4" height="7.2" rx="1.5"/></svg>
<svg class="a" style="left:2050.75px;top:634.5px" width="26" height="26" viewBox="0 0 26 26" fill="none" stroke="#c2c2c2" stroke-width="2.6" stroke-linecap="round" stroke-linejoin="round"><rect x="1.8" y="2.6" width="22.4" height="7.2" rx="1.5"/><path d="M13 14 v10 M8 19 h10"/></svg>
<svg class="a" style="left:2102.80px;top:632.30px;" width="29.4" height="29.4" viewBox="0 0 24 24" fill="#c2c2c2"><path d="M6 19c0 1.1.9 2 2 2h8c1.1 0 2-.9 2-2V7H6v12zM19 4h-3.5l-1-1h-5l-1 1H5v2h14V4z"/></svg>
<div class="a" style="left:2151.25px;top:686.25px;width:22.00px;height:57.50px;background:#a8a8a8;border-radius:11px;"></div>
<svg class="a" style="left:2189px;top:410px" width="57" height="60" viewBox="2189 410 57 60" fill="#c4c4c4" fill-rule="evenodd" stroke="#c4c4c4" stroke-width="1.2" stroke-linejoin="round"><path d="M2215.80 430.07 L2215.80 432.33 L2213.87 432.62 L2212.92 434.28 L2213.63 436.09 L2211.67 437.22 L2210.46 435.70 L2208.54 435.70 L2207.33 437.22 L2205.37 436.09 L2206.08 434.28 L2205.13 432.62 L2203.20 432.33 L2203.20 430.07 L2205.13 429.78 L2206.08 428.12 L2205.37 426.31 L2207.33 425.18 L2208.54 426.70 L2210.46 426.70 L2211.67 425.18 L2213.63 426.31 L2212.92 428.12 L2213.87 429.78 Z M2211.90 431.20 A2.4 2.4 0 1 0 2207.10 431.20 A2.4 2.4 0 1 0 2211.90 431.20 Z"/><path d="M2231.51 447.99 L2229.74 451.05 L2227.05 450.10 L2224.39 451.64 L2223.87 454.44 L2220.33 454.44 L2219.81 451.64 L2217.15 450.10 L2214.46 451.05 L2212.69 447.99 L2214.86 446.14 L2214.86 443.06 L2212.69 441.21 L2214.46 438.15 L2217.15 439.10 L2219.81 437.56 L2220.33 434.76 L2223.87 434.76 L2224.39 437.56 L2227.05 439.10 L2229.74 438.15 L2231.51 441.21 L2229.34 443.06 L2229.34 446.14 Z M2225.90 444.60 A3.8 3.8 0 1 0 2218.30 444.60 A3.8 3.8 0 1 0 2225.90 444.60 Z"/></svg>
<span class="t" style="left:155.00px;top:1150.13px;font-size:23.4px;line-height:23.4px;color:#e0e0e0;letter-spacing:-0.172px;">Simple</span>
<div class="a" style="left:235.00px;top:1146.50px;width:63.00px;height:28.00px;background:#5f5f5f;border-radius:14.5px;"></div>
<div class="a" style="left:239.50px;top:1151.25px;width:18.50px;height:18.50px;background:#111111;border-radius:50%;"></div>
<span class="t" style="left:345.50px;top:1150.13px;font-size:23.4px;line-height:23.4px;color:#e0e0e0;">0</span>
<div class="a" style="left:379.50px;top:1148.75px;width:27.50px;height:26.25px;background:#e6e6e6;"></div>
<span class="t m" style="left:383.50px;top:1154.46px;font-size:16px;line-height:16px;color:#222222;font-family:'DejaVu Sans Mono', 'Liberation Mono', monospace;letter-spacing:-0.5px;">$_</span>
<span class="t" style="left:425.00px;top:1150.13px;font-size:23.4px;line-height:23.4px;color:#e0e0e0;">2</span>
<svg class="a" style="left:458px;top:1148px" width="25" height="25" viewBox="0 0 25 25" fill="none" stroke="#e0e0e0" stroke-width="2.7"><rect x="5" y="5" width="15" height="15" rx="1.8"/><rect x="9.6" y="9.6" width="5.8" height="5.8" stroke-width="2.4"/><path d="M9 1.2 v3.4 M16 1.2 v3.4 M9 20.4 v3.4 M16 20.4 v3.4 M1.2 9 h3.4 M1.2 16 h3.4 M20.4 9 h3.4 M20.4 16 h3.4" stroke-width="2.2"/></svg>
<span class="t" style="left:518.00px;top:1150.13px;font-size:23.4px;line-height:23.4px;color:#e0e0e0;letter-spacing:0.432px;">Python (Pyodide) | Idle</span>
<span class="t" style="left:1527.80px;top:1150.13px;font-size:23.4px;line-height:23.4px;color:#e0e0e0;letter-spacing:0.364px;">Mode: Edit</span>
<svg class="a" style="left:1678px;top:1146px" width="27" height="28" viewBox="0 0 27 28" fill="none" stroke="#e0e0e0" stroke-width="2.6" stroke-linejoin="round" stroke-linecap="round"><path d="M13.5 1.8 L24.5 5.8 V12.5 C24.5 19 20 24 13.5 26.4 C7 24 2.5 19 2.5 12.5 V5.8 Z"/><path d="M9 8.8 L18 17.8 M18 8.8 L9 17.8"/></svg>
<span class="t" style="left:1737.90px;top:1150.13px;font-size:23.4px;line-height:23.4px;color:#e0e0e0;letter-spacing:0.200px;">Ln 15, Col 48</span>
<span class="t" style="left:1910.00px;top:1150.13px;font-size:23.4px;line-height:23.4px;color:#e0e0e0;letter-spacing:0.503px;">passivate_nanoribbon.ipynb</span>
</div></body></html>
